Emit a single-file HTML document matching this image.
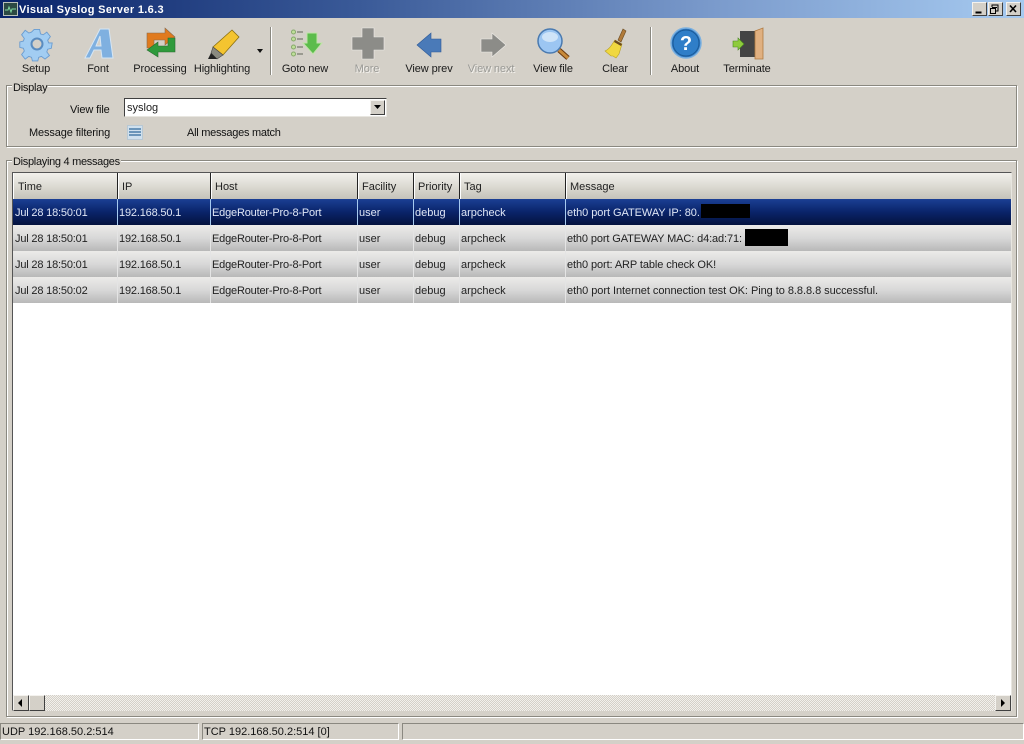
<!DOCTYPE html>
<html><head><meta charset="utf-8"><title>Visual Syslog Server 1.6.3</title>
<style>
html,body{margin:0;padding:0;background:#d4d0c8}
#p{position:relative;width:1024px;height:744px;overflow:hidden;background:#d4d0c8;font:11px "Liberation Sans",sans-serif;color:#111}
#p div{position:absolute;white-space:nowrap}
.t{line-height:14px}
.c{text-align:center;width:80px;top:62px;line-height:14px;color:#1a1a1a;letter-spacing:-.1px}
.dis{color:#9a9a96;text-shadow:1px 1px 0 #f4f2ee}
.grp{border:1px solid #8a8880;box-shadow:inset 1px 1px 0 #fff,1px 1px 0 #fff}
.lb{background:#d4d0c8;padding:0 1px;line-height:12px}
.h{top:173px;height:26px;background:linear-gradient(#f2f1ec,#d8d6ce 60%,#c4c2ba);border-left:1px solid #fff;box-shadow:inset -1px 0 0 #222;box-sizing:border-box;line-height:28px;padding-left:3px;color:#222}
.r{left:13px;width:998px;height:26px;background:linear-gradient(#ecebe9,#d8d8d8 50%,#b8b8b8)}
.r.s{background:linear-gradient(#1b3f94,#0a246a 50%,#04123e)}
.v{width:1px;height:26px;background:#e4e4e4}
.s .v{background:#a6caf0}
.x{line-height:28px;top:0;color:#222}
.n{letter-spacing:-.18px}
.m{letter-spacing:-.05px}
.s .x{color:#dfe6f5}
.sb{top:723px;height:17px;box-sizing:border-box;border:1px solid;border-color:#8a8880 #fff #fff #8a8880;line-height:17px;padding-left:1px;color:#111}
.btn{background:#d4d0c8;box-sizing:border-box;border:1px solid;border-color:#f4f2ee #404040 #404040 #f4f2ee}
.wb{top:2px;width:15px;height:14px}
svg{position:absolute;overflow:visible}
</style></head><body><div id="p">

<!-- title bar -->
<div style="left:0;top:0;width:1024px;height:18px;background:linear-gradient(90deg,#0a246a 0,#3a5a98 35%,#7b9bcc 70%,#a6caf0 100%)"></div>
<svg style="left:3px;top:2px" width="15" height="14"><rect x=".5" y=".5" width="14" height="13" fill="#2c4a44" stroke="#b8c0b8"/><path d="M2 8h3l1-3 2 5 1-3h4" fill="none" stroke="#7fd8a0"/></svg>
<div class="t" style="left:19px;top:3px;font-weight:bold;color:#fff;letter-spacing:.34px">Visual Syslog Server 1.6.3</div>
<div class="btn wb" style="left:972px"></div>
<div class="btn wb" style="left:988px"></div>
<div class="btn wb" style="left:1006px"></div>
<svg style="left:972px;top:2px" width="50" height="14"><path d="M3.500 10.500h6" stroke="#000" stroke-width="2"/><path d="M20 5.500h5M20 5v-2h6v6h-2M18.500 6.500h5v5h-5z" fill="none" stroke="#000"/><path d="M38 3.500l6 6.500M44 3.500l-6 6.500" stroke="#000" stroke-width="1.600"/></svg>

<!-- toolbar icons -->
<svg style="left:21px;top:27px" width="32" height="34" viewBox="0 0 32 34"><path d="M13 1h6l1 5 3 1 4-3 4 5-3 4 1 3h4v0l0 0-1 6-4 1-1 3 3 4-5 4-4-3-3 1-1 4h-6l-1-4-3-1-4 3-4-5 3-4-1-3-4-1v-6l4-1 1-3-3-4 4-5 4 3 3-1z" transform="translate(1.500 1.500) scale(.9)" fill="#a2cdf2" stroke="#6a9cd0"/><circle cx="16" cy="17" r="5.500" fill="#d4d0c8" stroke="#5a8cc0" stroke-width="2"/></svg>
<svg style="left:84px;top:27px" width="32" height="34"><path d="M1 31L16 2H25L29 31H18L17 23H10L6 31ZM12 19H17L16 9Z" fill="#7fb0e0" stroke="#d6e6f4" fill-rule="evenodd"/></svg>
<svg style="left:146px;top:27px" width="30" height="32"><path d="M1 21V6h18V1l10 9-10 8v-5H8v8z" fill="#e07a1e" stroke="#8a6a4a" stroke-width=".6"/><path d="M29 11v14H12v5L1 23l11-8v4h10v-8z" fill="#2f9a3c" stroke="#2a6a30" stroke-width=".6"/></svg>
<svg style="left:207px;top:28px" width="34" height="32"><path d="M25 2l7 7-16 18-10-8z" fill="#f4c430" stroke="#8a7010" stroke-width=".8"/><path d="M6 19l10 8-6 4-6-6z" fill="#8a8a80" stroke="#444" stroke-width=".6"/><path d="M4 25l6 6H1z" fill="#222"/></svg>
<svg style="left:257px;top:49px" width="8" height="5"><path d="M0 0h6l-3 4z" fill="#111"/></svg>
<div style="left:270px;top:27px;width:1px;height:48px;background:#8a8880;box-shadow:1px 0 0 #fff"></div>
<svg style="left:290px;top:28px" width="32" height="30"><g fill="#bfe09a" stroke="#86a86a"><circle cx="3.500" cy="4" r="2"/><circle cx="3.500" cy="11" r="2"/><circle cx="3.500" cy="19" r="2"/><circle cx="3.500" cy="26" r="2"/></g><path d="M7 4h6M7 11h6M7 19h6M7 26h6" stroke="#9a9a90" stroke-width="2"/><path d="M17 5h10v10h5L23 26 13 15h4z" fill="#5cbc4c" stroke="#bfe4a8"/></svg>
<svg style="left:352px;top:28px" width="32" height="32"><path d="M10 0h12v9h10v13H22v9H10V22H0V9h10z" fill="#8c8c88" stroke="#eeece8" stroke-width=".6"/></svg>
<svg style="left:417px;top:33px" width="26" height="25"><path d="M0 12L14 0v6h10v13H14v5z" fill="#4a7ab8" stroke="#2e5a98" stroke-width=".6"/></svg>
<svg style="left:481px;top:32px" width="26" height="26"><path d="M25 13L11 1v6H0v13h11v5z" fill="#8c8c88" stroke="#eeece8" stroke-width=".6"/></svg>
<svg style="left:537px;top:28px" width="34" height="32"><path d="M22 22l9 8" stroke="#6a3a10" stroke-width="5"/><path d="M22 22l9 8" stroke="#c88a3a" stroke-width="3"/><circle cx="13" cy="13" r="12" fill="#9cc6f2" stroke="#4a7ab0" stroke-width="1.500"/><ellipse cx="13" cy="9" rx="8" ry="5" fill="#cfe4f8"/></svg>
<svg style="left:602px;top:28px" width="26" height="31"><path d="M21 1l3 2-5 11-3-2z" fill="#b07a3a" stroke="#6a4a20" stroke-width=".6"/><path d="M13 12l7 4-3 10-3 4-3-2-2 0-6-5c5-2 7-7 10-11z" fill="#f0d840" stroke="#b8a020" stroke-width=".6"/><path d="M13 12l7 4-1 2-7-4z" fill="#6a4a20"/></svg>
<div style="left:650px;top:27px;width:1px;height:48px;background:#8a8880;box-shadow:1px 0 0 #fff"></div>
<svg style="left:670px;top:27px" width="32" height="32"><circle cx="16" cy="16" r="15" fill="#2f78c0" stroke="#7ab0e0" stroke-width="1.500"/><circle cx="16" cy="16" r="13" fill="#2f7ec8" stroke="#1a5a98"/><text x="16" y="23" text-anchor="middle" font-family="Liberation Sans,sans-serif" font-weight="bold" font-size="20" fill="#fff">?</text></svg>
<svg style="left:732px;top:28px" width="32" height="32"><path d="M8 3h15v26H8z" fill="#444"/><path d="M23 3l8-3v31h-8z" fill="#e0b080" stroke="#b07a40" stroke-width=".8"/><path d="M1 13h5V10l6 6-6 6v-3H1z" fill="#8ecb3c" stroke="#4a8a20" stroke-width=".6"/></svg>

<!-- toolbar labels -->
<div class="c" style="left:-4px">Setup</div>
<div class="c" style="left:58px">Font</div>
<div class="c" style="left:120px">Processing</div>
<div class="c" style="left:182px">Highlighting</div>
<div class="c" style="left:265px">Goto new</div>
<div class="c dis" style="left:327px">More</div>
<div class="c" style="left:389px">View prev</div>
<div class="c dis" style="left:451px">View next</div>
<div class="c" style="left:513px">View file</div>
<div class="c" style="left:575px">Clear</div>
<div class="c" style="left:645px">About</div>
<div class="c" style="left:707px">Terminate</div>

<!-- display group -->
<div class="grp" style="left:6px;top:85px;width:1009px;height:60px"></div>
<div class="lb" style="left:12px;top:82px;height:12px;letter-spacing:-.25px">Display</div>
<div class="t" style="left:70px;top:103px;letter-spacing:-.12px">View file</div>
<div style="left:124px;top:98px;width:263px;height:19px;box-sizing:border-box;background:#fff;border:1px solid;border-color:#404040 #e8e6e0 #e8e6e0 #404040;padding-left:2px;line-height:19px;color:#222">syslog</div>
<div class="btn" style="left:370px;top:100px;width:15px;height:15px"></div>
<svg style="left:374px;top:105px" width="8" height="5"><path d="M0 0h7L3.500 4z" fill="#000"/></svg>
<div class="t" style="left:29px;top:126px;letter-spacing:-.12px">Message filtering</div>
<svg style="left:127px;top:125px" width="16" height="15"><rect x=".5" y=".5" width="15" height="14" fill="#cfe0ee" stroke="#b8c8d4"/><path d="M2 4h12M2 7h12M2 10h12" stroke="#4a7ca8" stroke-width="1.500"/></svg>
<div class="t" style="left:187px;top:126px;letter-spacing:-.27px">All messages match</div>

<!-- message group -->
<div class="grp" style="left:6px;top:160px;width:1009px;height:555px"></div>
<div class="lb" style="left:12px;top:156px;height:12px;letter-spacing:-.3px">Displaying 4 messages</div>

<!-- table -->
<div style="left:12px;top:172px;width:1000px;height:539px;box-sizing:border-box;background:#fff;border:1px solid;border-color:#555 #e8e6e0 #e8e6e0 #555"></div>
<div class="h" style="left:13px;width:105px;padding-left:4px">Time</div>
<div class="h" style="left:118px;width:93px">IP</div>
<div class="h" style="left:211px;width:147px">Host</div>
<div class="h" style="left:358px;width:56px">Facility</div>
<div class="h" style="left:414px;width:46px">Priority</div>
<div class="h" style="left:460px;width:106px">Tag</div>
<div class="h" style="left:566px;width:445px;box-shadow:none">Message</div>

<div class="r s" style="top:199px"><div class="v" style="left:104px"></div><div class="v" style="left:197px"></div><div class="v" style="left:344px"></div><div class="v" style="left:400px"></div><div class="v" style="left:446px"></div><div class="v" style="left:552px"></div>
<div class="x n" style="left:2px">Jul 28 18:50:01</div><div class="x n" style="left:106px">192.168.50.1</div><div class="x n" style="left:199px">EdgeRouter-Pro-8-Port</div><div class="x" style="left:346px">user</div><div class="x" style="left:402px">debug</div><div class="x" style="left:448px">arpcheck</div><div class="x m" style="left:554px">eth0 port GATEWAY IP: 80.</div>
<div style="left:688px;top:5px;width:49px;height:14px;background:#000"></div></div>

<div class="r" style="top:225px"><div class="v" style="left:104px"></div><div class="v" style="left:197px"></div><div class="v" style="left:344px"></div><div class="v" style="left:400px"></div><div class="v" style="left:446px"></div><div class="v" style="left:552px"></div>
<div class="x n" style="left:2px">Jul 28 18:50:01</div><div class="x n" style="left:106px">192.168.50.1</div><div class="x n" style="left:199px">EdgeRouter-Pro-8-Port</div><div class="x" style="left:346px">user</div><div class="x" style="left:402px">debug</div><div class="x" style="left:448px">arpcheck</div><div class="x m" style="left:554px;letter-spacing:-.12px">eth0 port GATEWAY MAC: d4:ad:71:</div>
<div style="left:732px;top:4px;width:43px;height:17px;background:#000"></div></div>

<div class="r" style="top:251px"><div class="v" style="left:104px"></div><div class="v" style="left:197px"></div><div class="v" style="left:344px"></div><div class="v" style="left:400px"></div><div class="v" style="left:446px"></div><div class="v" style="left:552px"></div>
<div class="x n" style="left:2px">Jul 28 18:50:01</div><div class="x n" style="left:106px">192.168.50.1</div><div class="x n" style="left:199px">EdgeRouter-Pro-8-Port</div><div class="x" style="left:346px">user</div><div class="x" style="left:402px">debug</div><div class="x" style="left:448px">arpcheck</div><div class="x m" style="left:554px;letter-spacing:-.1px">eth0 port: ARP table check OK!</div></div>

<div class="r" style="top:277px"><div class="v" style="left:104px"></div><div class="v" style="left:197px"></div><div class="v" style="left:344px"></div><div class="v" style="left:400px"></div><div class="v" style="left:446px"></div><div class="v" style="left:552px"></div>
<div class="x n" style="left:2px">Jul 28 18:50:02</div><div class="x n" style="left:106px">192.168.50.1</div><div class="x n" style="left:199px">EdgeRouter-Pro-8-Port</div><div class="x" style="left:346px">user</div><div class="x" style="left:402px">debug</div><div class="x" style="left:448px">arpcheck</div><div class="x m" style="left:554px">eth0 port Internet connection test OK: Ping to 8.8.8.8 successful.</div></div>

<!-- scrollbar -->
<div style="left:13px;top:695px;width:998px;height:16px;background:repeating-conic-gradient(#d4d0c8 0 25%,#f2f0ec 0 50%) 0 0/2px 2px"></div>
<div class="btn" style="left:13px;top:695px;width:16px;height:16px"></div>
<div class="btn" style="left:29px;top:695px;width:16px;height:16px"></div>
<div class="btn" style="left:995px;top:695px;width:16px;height:16px"></div>
<svg style="left:18px;top:699px" width="5" height="8"><path d="M4 0v8L0 4z" fill="#000"/></svg>
<svg style="left:1001px;top:699px" width="5" height="8"><path d="M0 0v8l4-4z" fill="#000"/></svg>

<!-- status bar -->
<div class="sb" style="left:0;width:199px">UDP 192.168.50.2:514</div>
<div class="sb" style="left:202px;width:197px">TCP 192.168.50.2:514 [0]</div>
<div class="sb" style="left:402px;width:622px"></div>
</div></body></html>
